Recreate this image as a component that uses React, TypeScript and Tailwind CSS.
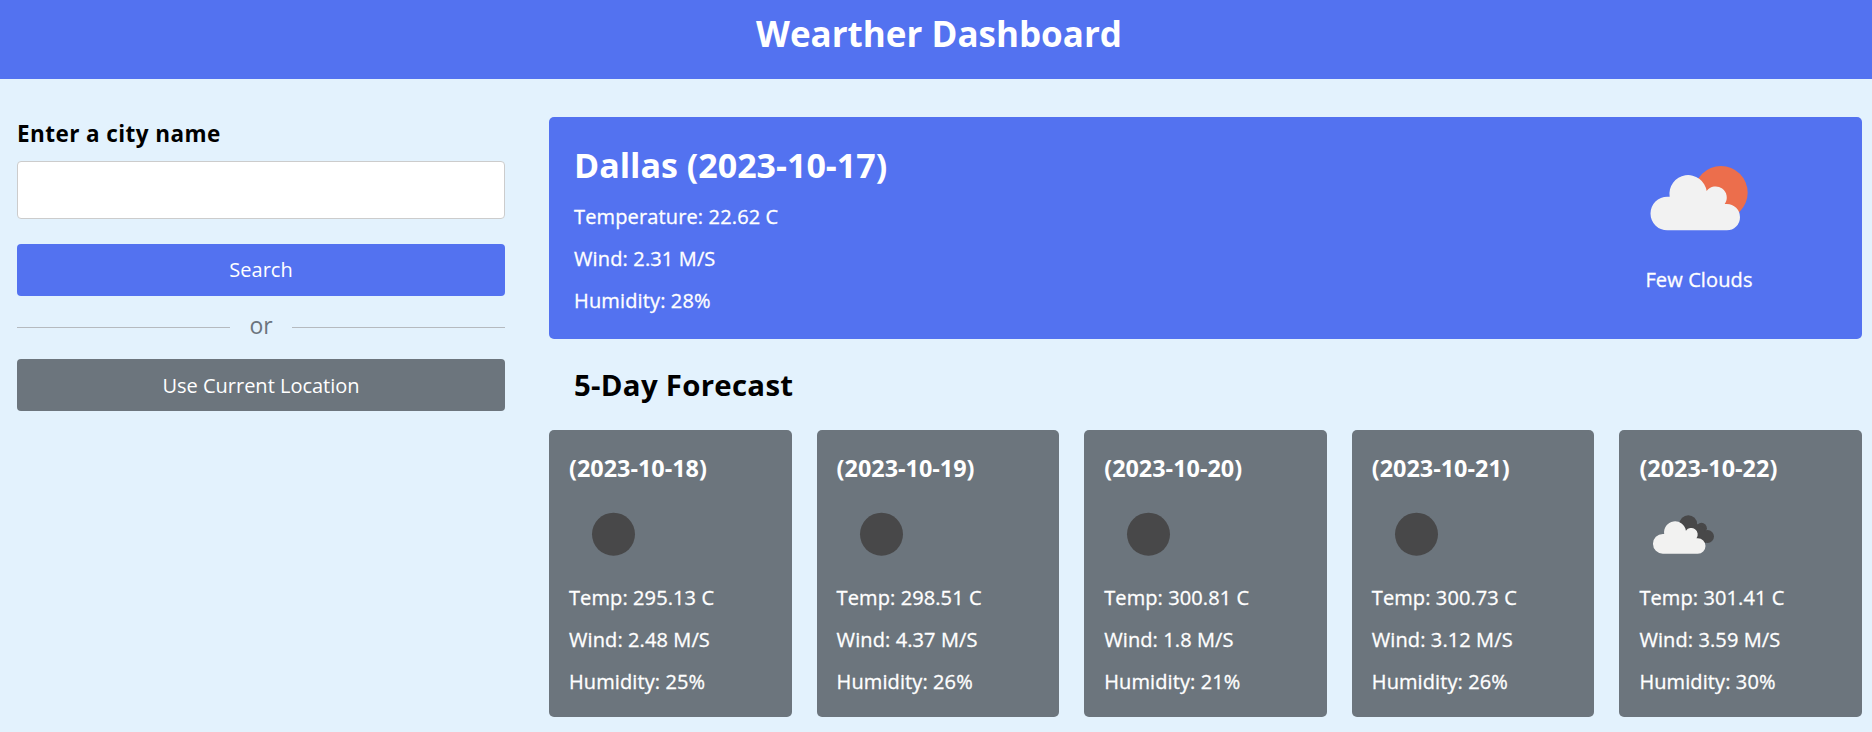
import React from "react";

const days = [
  { date: "2023-10-18", temp: "295.13", wind: "2.48", hum: 25, icon: "clear" },
  { date: "2023-10-19", temp: "298.51", wind: "4.37", hum: 26, icon: "clear" },
  { date: "2023-10-20", temp: "300.81", wind: "1.8", hum: 21, icon: "clear" },
  { date: "2023-10-21", temp: "300.73", wind: "3.12", hum: 26, icon: "clear" },
  { date: "2023-10-22", temp: "301.41", wind: "3.59", hum: 30, icon: "broken" },
];

const cloud =
  "M202 391 A50.5 50.5 0 0 1 202 290 H209 A56 56 0 1 1 320 273 A33 33 0 0 1 374 312 H380.5 A39.5 39.5 0 0 1 380.5 391 Z";

function DayIcon({ kind }: { kind: string }) {
  return (
    <svg viewBox="0 0 88 88" className="mt-[6px] block h-[88px] w-[88px]">
      {kind === "clear" ? (
        <circle cx="44.5" cy="44.2" r="21.5" fill="#484849" />
      ) : (
        <>
          <g fill="#484849">
            <circle cx="49.3" cy="34" r="8.8" />
            <circle cx="62.5" cy="38.2" r="5.4" />
            <circle cx="68.5" cy="46.5" r="6.5" />
            <path d="M46 34h12l7 4 2 15H50z" />
          </g>
          <path d={cloud} fill="#f2f2f1" transform="translate(-15.7 -12.8) scale(0.1957)" />
        </>
      )}
    </svg>
  );
}

export default function App() {
  return (
    <div className="min-h-[732px] bg-[#e3f2fd] font-['Open_Sans',sans-serif] text-white">
      <h1 className="h-[79px] bg-[#5372f0] pt-[10px] pl-[6px] text-center text-[35px] leading-[48px] font-bold">Wearther Dashboard</h1>
      <div className="flex gap-11 pt-[38px] pr-[10px] pl-[17px]">
        <section className="w-[488px] shrink-0">
          <h3 className="pt-px text-[22.5px] leading-[32px] font-bold tracking-[0.42px] text-black">Enter a city name</h3>
          <input className="mt-[11px] block h-[58px] w-full rounded border border-[#ccc] bg-white px-4 outline-none" />
          <button className="mt-[25px] block h-[52px] w-full rounded bg-[#5372f0] text-[20px]">Search</button>
          <div className="flex h-[63px] items-center gap-[19px] text-[23px] text-[#6c757d]">
            <span className="h-px flex-1 bg-[#b5babf]" />
            <span className="-mt-[4px]">or</span>
            <span className="h-px flex-1 bg-[#b5babf]" />
          </div>
          <button className="block h-[52px] w-full rounded bg-[#6c757d] pt-px text-[20px]">Use Current Location</button>
        </section>
        <main className="min-w-0 flex-1">
          <div className="flex h-[222px] justify-between rounded-[5px] bg-[#5372f0] pr-[88px] pl-[25px]">
            <div className="pt-[24px] text-[20px] font-medium">
              <h2 className="text-[34px] leading-[48px] font-bold">Dallas (2023-10-17)</h2>
              <div className="mt-[15px] space-y-4 leading-[26px] tracking-[0.14px] [-webkit-text-stroke:0.3px_white]">
                <p>Temperature: 22.62 C</p>
                <p>Wind: 2.31 M/S</p>
                <p>Humidity: 28%</p>
              </div>
            </div>
            <div className="flex flex-col items-center pt-[27px] text-[20px] font-medium">
              <svg viewBox="72 132 450 336" className="h-[112px] w-[150px]">
                <circle cx="363" cy="278" r="80" fill="#ec6e4c" />
                <path d={cloud} fill="#f2f2f2" />
              </svg>
              <p className="mt-[11px] leading-[26px] tracking-[0.12px] [-webkit-text-stroke:0.3px_white]">Few Clouds</p>
            </div>
          </div>
          <h2 className="mt-[25px] pl-[25px] text-[29.4px] leading-[42px] font-bold tracking-[0.28px] text-black">5-Day Forecast</h2>
          <ul className="mt-[24px] flex gap-[25px]">
            {days.map((d) => (
              <li key={d.date} className="h-[287px] flex-1 rounded-[5px] bg-[#6c757d] px-5 pt-[22px] text-[20px] font-medium">
                <h3 className="text-[23.4px] leading-[32px] font-bold">({d.date})</h3>
                <DayIcon kind={d.icon} />
                <div className="mt-[7px] space-y-4 leading-[26px] tracking-[0.1px] [-webkit-text-stroke:0.3px_white]">
                  <p>Temp: {d.temp} C</p>
                  <p>Wind: {d.wind} M/S</p>
                  <p>Humidity: {d.hum}%</p>
                </div>
              </li>
            ))}
          </ul>
        </main>
      </div>
    </div>
  );
}
